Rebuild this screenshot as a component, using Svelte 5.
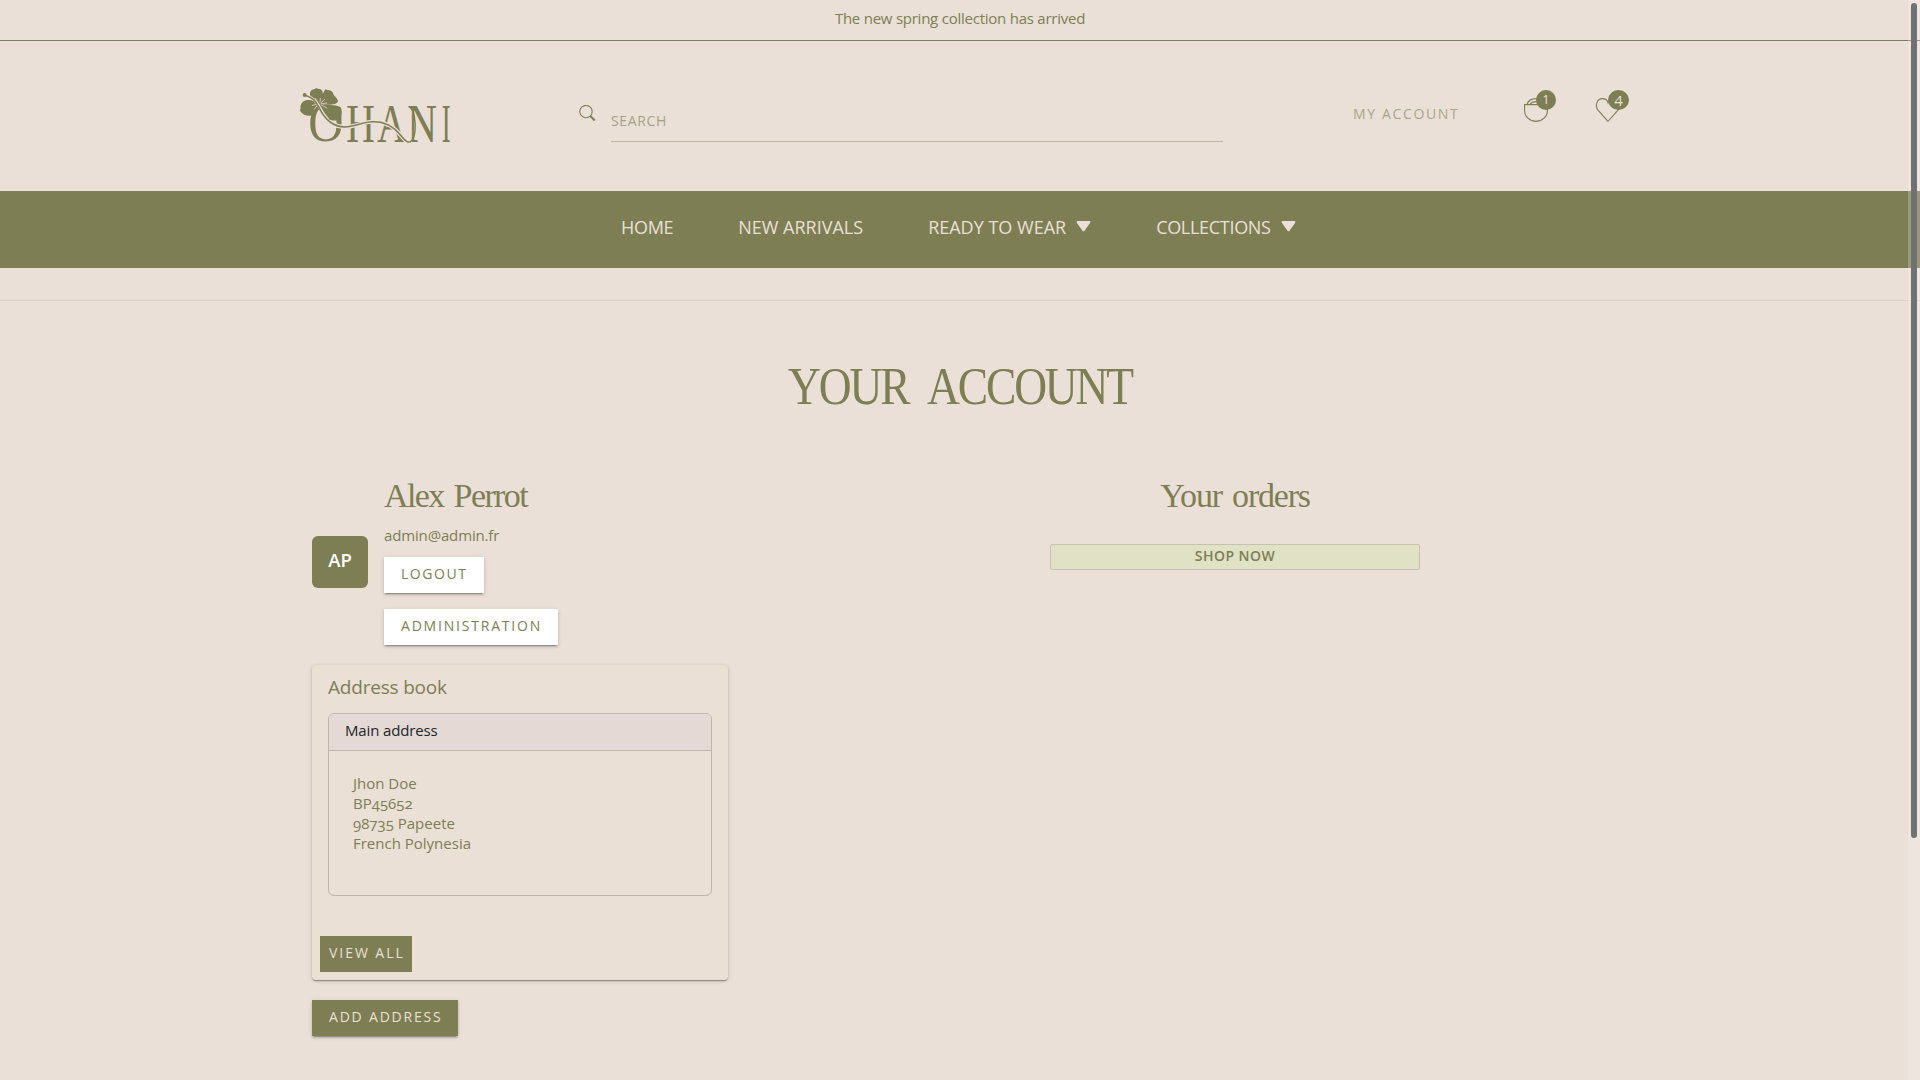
<script>
  const links = [
    { label: 'HOME', tight: true },
    { label: 'NEW ARRIVALS' },
    { label: 'READY TO WEAR', menu: true },
    { label: 'COLLECTIONS', menu: true, tight: true }
  ];
  const address = ['Jhon Doe', 'BP45652', '98735 Papeete', 'French Polynesia'];
</script>

<div class="page">
  <div class="announce">The new spring collection has arrived</div>

  <header>
    <svg class="logo" width="151" height="55" viewBox="60 54 453 165" aria-label="Ohani">
      <g class="letters">
        <text transform="translate(85 214) scale(0.9 1)">O</text>
        <text transform="translate(199 215) scale(0.73 1)">H</text>
        <text transform="translate(291 215) scale(0.74 1)">A</text>
        <text transform="translate(382 215) scale(0.76 1)">N</text>
        <text transform="translate(485 215) scale(0.49 1)">I</text>
      </g>
      <path class="halo" d="M150 156 C164 166 178 171 195 171 C225 171 240 157 275 155 C320 153 345 174 362 196 C378 216 386 220 394 213" />
      <!-- hibiscus -->
      <g fill="#7d7e53">
        <path d="M119 102 C106 94 88 84 90 68 C93 56 104 60 109 54 C116 58 127 55 128 67 C131 80 124 88 119 102Z" />
        <path d="M119 102 C120 84 128 72 136 58 C147 62 157 60 160 72 C163 80 173 84 174 94 C172 106 140 106 119 102Z" />
        <path d="M118 101 C140 107 172 102 182 112 C188 124 184 134 184 146 C172 152 162 154 150 149 C132 142 124 120 118 101Z" />
        <path d="M118 101 C104 90 80 86 68 96 C58 106 64 114 60 122 C68 134 78 138 92 137 C108 134 112 116 118 101Z" />
      </g>
      <path d="M112 94 L105 84 M120 98 L121 84 M122 99 L135 87 M123 101 L142 99 M122 104 L142 115 M113 105 L103 118 M111 102 L96 107" fill="none" stroke="#eae0d7" stroke-width="2.2" />
      <path d="M80 79 C98 82 110 94 119 112 C126 126 134 138 144 149" fill="none" stroke="#eae0d7" stroke-width="8.500" />
      <path d="M72 75 C96 80 108 92 117 112 C132 144 156 170 195 171 C225 171 240 157 275 155 C320 153 345 174 362 196 C378 216 386 220 394 213 C406 202 408 168 403 140 C401 126 398 118 388 110" fill="none" stroke="#7d7e53" stroke-width="4.5" />
      <circle cx="74" cy="75" r="6" fill="#7d7e53" />
    </svg>

    <div class="search">
      <svg width="17" height="17" viewBox="0 0 17 17" fill="none" stroke="#7d7e53">
        <circle cx="7" cy="6.6" r="6.2" stroke-width="1.1" />
        <path d="M11.3 11 L15.800 15.500" stroke-width="2" />
      </svg>
      <div class="field">SEARCH</div>
    </div>

    <div class="account">MY ACCOUNT</div>

    <div class="icon bag">
      <svg width="24" height="24" viewBox="0 0 24 24" fill="none" stroke="#7d7e53" stroke-width="1.1">
        <path d="M0.6 6.6 H23.4 V12.4 A11.4 11 0 0 1 0.6 12.4 Z" />
        <path d="M3 6.6 C4 3 7.5 0.6 12 0.6 C16.5 0.6 20 3 21 6.6 M6 6.6 C7 4.6 9 3.6 12 3.6 C15 3.6 17 4.6 18 6.6" />
      </svg>
      <span class="badge">1</span>
    </div>
    <div class="icon heart">
      <svg width="24" height="24" viewBox="0 0 24 24" fill="none" stroke="#7d7e53" stroke-width="1.1">
        <path d="M12 23.3 L2.2 12.4 C-1.2 8 0.6 0.7 6.4 0.6 C9.4 0.6 11.4 2.6 12 4.6 C12.6 2.6 14.6 0.6 17.6 0.6 C23.4 0.7 25.2 8 21.8 12.4 Z" />
      </svg>
      <span class="badge big">4</span>
    </div>
  </header>

  <nav>
    {#each links as link}
      <span class="link" class:tight={link.tight}>
        {link.label}
        {#if link.menu}
          <svg width="15" height="11" viewBox="0 0 15 11"><path d="M1.5 0 H13.5 Q15 0.3 14.2 1.7 L8.5 9.7 Q7.5 10.7 6.5 9.7 L0.8 1.7 Q0 0.3 1.5 0Z" fill="#eae0d7" /></svg>
        {/if}
      </span>
    {/each}
  </nav>
  <div class="rule"></div>

  <main>
    <h1>YOUR ACCOUNT</h1>
    <div class="columns">
      <section class="left">
        <div class="profile">
          <div class="avatar">AP</div>
          <div class="info">
            <h2>Alex Perrot</h2>
            <div class="email">admin@admin.fr</div>
            <button class="white logout">LOGOUT</button>
            <button class="white">ADMINISTRATION</button>
          </div>
        </div>
        <div class="card">
          <h3>Address book</h3>
          <div class="box">
            <div class="box-head">Main address</div>
            <div class="box-body">
              {#each address as line}<div>{line}</div>{/each}
            </div>
          </div>
          <button class="olive flat">VIEW ALL</button>
        </div>
        <button class="olive add">ADD ADDRESS</button>
      </section>

      <section class="orders">
        <h2>Your orders</h2>
        <div class="shop">SHOP NOW</div>
      </section>
    </div>
  </main>

  <div class="track"><div class="thumb"></div></div>
</div>

<style>
  :global(body) { background: #eae0d7; overflow: hidden; }
  .page {
    position: relative;
    height: 1080px;
    overflow: hidden;
    background: #eae0d7;
    color: #7d7e53;
    font-family: 'Open Sans', 'Noto Sans', sans-serif;
    font-size: 15px;
    line-height: 20px;
  }
  .announce {
    height: 40px;
    line-height: 37px;
    text-align: center;
    letter-spacing: -0.24px;
    border-bottom: 1px solid #7d7e53;
  }
  header {
    display: flex;
    align-items: flex-start;
    height: 103px;
    padding: 47px 0 0 300px;
  }
  .logo { display: block; flex: none; overflow: visible; }
  .letters { font-family: 'Liberation Serif', serif; font-size: 163px; fill: #7d7e53; }
  .halo { fill: none; stroke: #eae0d7; stroke-width: 12; }
  .search { display: flex; gap: 15px; margin: 17px 0 0 128px; }
  .search svg { flex: none; }
  .field {
    width: 612px;
    padding: 6px 0 10px;
    border-bottom: 1px solid #bfb5a2;
    font-size: 14px;
    letter-spacing: 0.65px;
    color: #a5a283;
  }
  .account {
    width: 170px;
    margin: 16px 0 0 130px;
    padding-right: 1px;
    box-sizing: content-box;
    font-size: 14px;
    letter-spacing: 1.65px;
    color: #a9a58a;
  }
  .icon { position: relative; width: 24px; height: 24px; margin-top: 10px; }
  .icon svg { display: block; overflow: visible; }
  .heart { margin-left: 48px; }
  .badge {
    position: absolute;
    left: 12px;
    top: -8px;
    width: 20px;
    height: 20px;
    border-radius: 50%;
    background: #7d7e53;
    color: #eae0d7;
    font-size: 13px;
    line-height: 18px;
    text-align: center;
  }
  .badge.big { width: 21px; font-size: 15px; line-height: 21px; }
  nav {
    display: flex;
    gap: 65px;
    height: 77px;
    padding-left: 621px;
    background: #7d7e53;
    color: #eae0d7;
    font-size: 18px;
    line-height: 73px;
  }
  .link { display: flex; align-items: center; height: 73px; white-space: nowrap; }
  .link svg { margin: -2px 0 0 10px; }
  .tight { letter-spacing: -0.3px; }
  .rule { margin-top: 32px; height: 1px; background: #dcd2c8; }
  main { padding-top: 55px; }
  h1, h2 { margin: 0; font-family: 'Liberation Serif', serif; font-weight: 400; }
  h1 {
    font-size: 53px;
    line-height: 61px;
    text-align: center;
    letter-spacing: -2.5px;
    word-spacing: 14px;
    transform: scaleX(0.858);
  }
  h2 { font-size: 34px; line-height: 40px; letter-spacing: -1.6px; word-spacing: 3px; }
  .columns { display: flex; align-items: flex-start; margin: 59px 0 0 312px; }
  .left { width: 416px; }
  .profile { display: flex; align-items: center; gap: 16px; }
  .avatar {
    width: 56px;
    height: 52px;
    margin-top: 3px;
    border-radius: 6px;
    background: #7d7e53;
    color: #fff;
    font-size: 18.5px;
    font-weight: 600;
    line-height: 47px;
    text-align: center;
  }
  .info { display: flex; flex-direction: column; align-items: flex-start; }
  .email { margin: 9px 0 12px; letter-spacing: -0.15px; }
  button {
    display: block;
    height: 36px;
    padding: 0 0 3px 17px;
    border: 0;
    font: 14px/33px 'Open Sans', 'Noto Sans', sans-serif;
    letter-spacing: 1.8px;
    text-align: left;
    white-space: nowrap;
    box-shadow: 0 3px 1px -2px rgba(0, 0, 0, 0.2), 0 2px 2px rgba(0, 0, 0, 0.14), 0 1px 5px rgba(0, 0, 0, 0.12);
  }
  .white { width: 174px; background: #fff; color: #7d7e53; }
  .logout { width: 100px; margin-bottom: 16px; letter-spacing: 1.55px; }
  .olive { background: #7d7e53; color: #eae0d7; }
  .card {
    height: 315px;
    box-sizing: border-box;
    margin: 20px 0;
    padding: 10px 16px 8px;
    border-radius: 4px;
    background: #eae0d6;
    box-shadow: 0 2px 1px -1px rgba(0, 0, 0, 0.22), 0 1px 1px rgba(0, 0, 0, 0.16), 0 1px 4px rgba(0, 0, 0, 0.18);
  }
  h3 { margin: 0 0 14px; font-size: 19px; font-weight: 400; line-height: 24px; letter-spacing: -0.2px; }
  .box {
    box-sizing: border-box;
    height: 183px;
    border: 1px solid #bfb5ad;
    border-radius: 6px;
    overflow: hidden;
  }
  .box-head {
    height: 36px;
    padding-left: 16px;
    border-bottom: 1px solid #bfb5ad;
    background: #e4d9d4;
    color: #212529;
    line-height: 33px;
    letter-spacing: -0.15px;
  }
  .box-body { padding: 22px 0 0 24px; font-variant-numeric: oldstyle-nums; }
  .flat { width: 92px; margin: 40px 0 0 -8px; padding-left: 9px; letter-spacing: 1.95px; box-shadow: none; }
  .add { width: 146px; }
  .orders { width: 370px; margin-left: 322px; text-align: center; }
  .orders h2 { letter-spacing: -1.2px; }
  .shop {
    height: 24px;
    margin-top: 28px;
    border: 1px solid #c9c1ae;
    border-radius: 2px;
    background: #e0e1c5;
    font-size: 14px;
    font-weight: 600;
    line-height: 22px;
    letter-spacing: 0.45px;
  }
  .track {
    position: absolute;
    top: 0;
    right: 0;
    width: 12px;
    height: 1080px;
    background: rgba(245, 245, 248, 0.24);
  }
  .thumb { width: 6px; height: 835px; margin: 3px 0 0 3px; border-radius: 3px; background: #717171; }
</style>
